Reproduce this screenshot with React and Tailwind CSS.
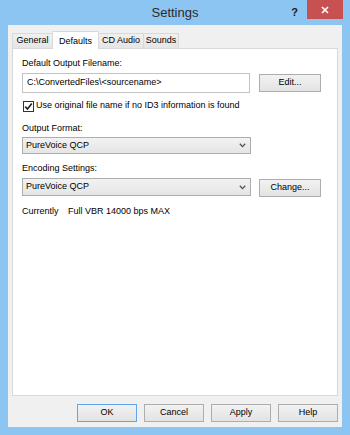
import React from 'react'

const ui = { fontFamily: '"Liberation Sans", Arial, sans-serif' }

function Button({ children, primary, className = '' }) {
  return (
    <div
      className={`h-[18px] flex items-center justify-center text-[9px] text-black border bg-gradient-to-b from-[#f2f2f2] to-[#e3e3e3] ${
        primary ? 'border-[#5ea6e6]' : 'border-[#adadad]'
      } ${className}`}
    >
      {children}
    </div>
  )
}

function Chevron() {
  return (
    <svg width="7" height="5" viewBox="0 0 7 5" className="shrink-0">
      <path d="M0.8 0.8 L3.5 3.6 L6.2 0.8" fill="none" stroke="#505050" strokeWidth="1.3" />
    </svg>
  )
}

function Select({ value, className = '' }) {
  return (
    <div
      className={`w-[229px] flex items-center justify-between pl-[3px] pr-[4px] border border-[#adadad] bg-gradient-to-b from-[#f2f2f2] to-[#e5e5e5] text-[9px] text-black ${className}`}
    >
      <span>{value}</span>
      <Chevron />
    </div>
  )
}

function Tab({ label, active, className = '' }) {
  if (active) {
    return (
      <div className={`h-[18px] flex items-start pt-[3px] justify-center bg-white border border-b-0 border-[#d9d9d9] text-[9px] text-black relative z-10 ${className}`}>
        {label}
      </div>
    )
  }
  return (
    <div className={`h-[16px] flex items-center justify-center bg-gradient-to-b from-[#f0f0f0] to-[#e5e5e5] border border-[#d9d9d9] text-[9px] text-black ${className}`}>
      {label}
    </div>
  )
}

export default function App() {
  return (
    <div className="w-[350px] h-[435px] bg-[#8cc4f2] flex flex-col overflow-hidden" style={ui}>
      {/* title bar */}
      <div className="h-[25px] grid grid-cols-[1fr_auto_1fr] shrink-0">
        <div />
        <div className="text-[13px] text-[#2b2b2b] leading-[25px] pb-[1px]">Settings</div>
        <div className="flex justify-end items-start">
          <span className="text-[11px] font-bold text-[#1a1a1a] mt-[4px] mr-[9px]">?</span>
          <div className="w-[36px] h-[19px] mr-[7px] bg-[#c75050] flex items-center justify-center">
            <svg width="8" height="8" viewBox="0 0 8 8">
              <path d="M1 1 L7 7 M7 1 L1 7" stroke="#fff" strokeWidth="1.6" />
            </svg>
          </div>
        </div>
      </div>

      {/* client area */}
      <div className="flex-1 mx-[8px] mb-[8px] bg-[#f0f0f0] flex flex-col px-[4px] pt-[6px]">
        <div className="flex items-end -mb-px">
          <Tab label="General" className="w-[41px]" />
          <Tab label="Defaults" active className="w-[47px] -ml-px" />
          <Tab label="CD Audio" className="w-[46px] -ml-px" />
          <Tab label="Sounds" className="w-[36px] -ml-px" />
        </div>

        <div className="flex-1 bg-white border border-[#d9d9d9] pl-[9px] pt-[8px] flex flex-col text-[9px] text-black">
          <div className="h-[13px] leading-[13px]">Default Output Filename:</div>
          <div className="flex items-center mt-[3px]">
            <div className="w-[228px] h-[20px] border border-[#c3c3c3] flex items-center pl-[4px]">
              C:\ConvertedFiles\&lt;sourcename&gt;
            </div>
            <Button className="w-[62px] ml-[9px]">Edit...</Button>
          </div>

          <div className="h-[12px] flex items-center mt-[7px]">
            <div className="w-[11px] h-[11px] border border-[#333] bg-white flex items-center justify-center ml-px">
              <svg width="9" height="9" viewBox="0 0 9 9">
                <path d="M1.2 4.6 L3.5 7 L7.8 1.6" fill="none" stroke="#222" strokeWidth="1.6" />
              </svg>
            </div>
            <span className="ml-[2px]">Use original file name if no ID3 information is found</span>
          </div>

          <div className="h-[13px] leading-[13px] mt-[10px]">Output Format:</div>
          <Select value="PureVoice QCP" className="h-[17px] mt-[2px]" />

          <div className="h-[13px] leading-[13px] mt-[8px]">Encoding Settings:</div>
          <div className="flex items-start mt-[3px]">
            <Select value="PureVoice QCP" className="h-[18px]" />
            <Button className="w-[62px] ml-[8px] mt-px">Change...</Button>
          </div>

          <div className="h-[13px] leading-[13px] mt-[8px] flex">
            <span className="w-[46px]">Currently</span>
            <span>Full VBR 14000 bps MAX</span>
          </div>
        </div>

        <div className="flex justify-end gap-[7px] pt-[8px] pb-[5px]">
          <Button primary className="w-[60px]">OK</Button>
          <Button className="w-[60px]">Cancel</Button>
          <Button className="w-[60px]">Apply</Button>
          <Button className="w-[60px]">Help</Button>
        </div>
      </div>
    </div>
  )
}
